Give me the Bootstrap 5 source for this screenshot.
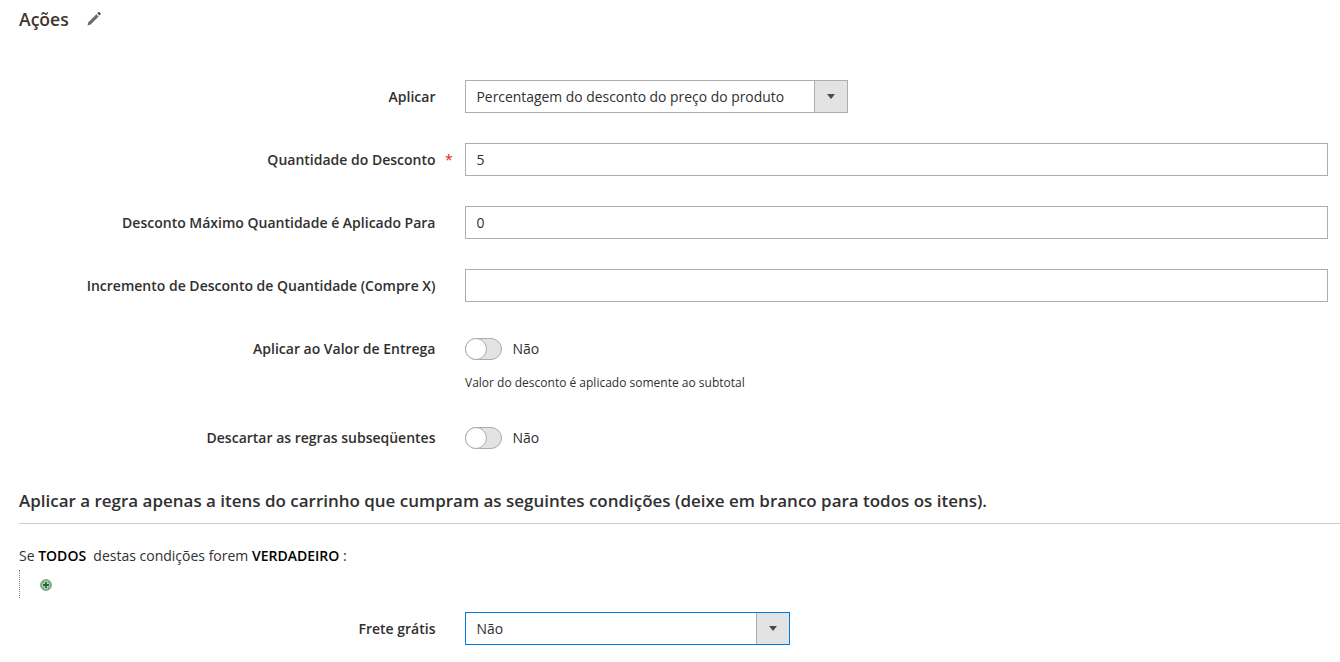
<!DOCTYPE html>
<html lang="pt-BR">
<head>
  <meta charset="UTF-8" />
  <meta name="viewport" content="width=device-width, initial-scale=1.0" />
  <title>Ações</title>
  <link href="https://cdn.jsdelivr.net/npm/bootstrap@5.3.3/dist/css/bootstrap.min.css" rel="stylesheet" />
  <style>
    html, body { height: 100%; overflow: hidden; }
    body { font-family: "Open Sans", sans-serif; font-size: 14px; color: #303030; background: #fff; }
    .page-wrap { padding-left: 19px; }
    .section-head { height: 80px; padding-top: 9px; }
    .section-title { font-size: 17.6px; font-weight: 600; line-height: 20px; color: #41362f; margin: 0; }
    .edit-icon { margin-left: 17px; margin-top: 2px; }
    .field-row { display: flex; align-items: flex-start; margin-bottom: 30px; margin-left: -19px; padding-right: 12px; }
    .field-label { width: 435.5px; flex: none; text-align: right; font-weight: 600; color: #303030; line-height: 33px; margin: 0; }
    .field-mark { width: 29.5px; flex: none; line-height: 33px; padding-left: 9.5px; color: #e22626; }
    .field-control { flex: 1 1 auto; }
    .text-field.form-control { height: 33px; border: 1px solid #adadad; border-radius: 0; font-size: 14px; color: #303030; padding: 0 10.5px; line-height: 31px; box-shadow: none; }
    .select-field { display: flex; height: 33px; border: 1px solid #adadad; background: #fff; }
    .select-field select { flex: 1 1 auto; min-width: 0; appearance: none; border: 0; outline: 0; background: transparent; padding: 1px 10.5px 0; font-family: inherit; font-size: 13.9px; color: #303030; }
    .select-arrow { width: 33px; flex: none; background: #e3e3e3; border-left: 1px solid #adadad; display: flex; align-items: center; justify-content: center; }
    .select-arrow::after { content: ""; border: 4.5px solid transparent; border-top: 5px solid #514943; border-bottom: 0; }
    .select-wide { width: 383px; }
    .select-focus { width: 325px; border-color: #007bdb; }
    .toggle-line { display: flex; align-items: center; height: 33px; gap: 10.5px; }
    .toggle-track { width: 37px; height: 22px; border: 1px solid #adadad; border-radius: 12px; background: #e3e3e3; position: relative; }
    .toggle-track::before { content: ""; position: absolute; left: -1px; top: -1px; width: 22px; height: 22px; border-radius: 50%; background: #fff; border: 1px solid #adadad; }
    .toggle-text { color: #303030; }
    .field-note { font-size: 12px; line-height: 17px; margin-top: 9px; color: #303030; }
    .cond-head { font-size: 16.98px; font-weight: 600; line-height: 20px; color: #303030; margin: 37px 0 0; padding-bottom: 12px; border-bottom: 1px solid #cccccc; }
    .cond-line { margin-top: 22px; line-height: 20px; color: #303030; }
    .cond-line strong { font-weight: 600; color: #000; }
    .cond-tree { border-left: 1px dotted #808080; height: 28px; margin-top: 4px; padding: 8px 0 0 19px; margin-bottom: 14px; }
    .plus-icon { display: block; }
  </style>
</head>
<body>
  <div class="page-wrap">
    <div class="section-head d-flex align-items-start">
      <h2 class="section-title">Ações</h2>
      <svg class="edit-icon" width="16" height="16" viewBox="0 0 16 16" aria-hidden="true">
        <path d="M1.500 14.500l.9-3.200 8-8 2.300 2.300-8 8z" fill="#6b6b6b"/>
        <path d="M11.200 2.300l1-1c.4-.4.9-.4 1.300 0l1 1c.4.4.4.9 0 1.300l-1 1z" fill="#514943"/>
      </svg>
    </div>

    <div class="field-row">
      <label class="field-label">Aplicar</label>
      <span class="field-mark"></span>
      <div class="field-control">
        <div class="select-field select-wide">
          <select><option>Percentagem do desconto do preço do produto</option></select>
          <span class="select-arrow"></span>
        </div>
      </div>
    </div>

    <div class="field-row">
      <label class="field-label">Quantidade do Desconto</label>
      <span class="field-mark">*</span>
      <div class="field-control"><input type="text" class="form-control text-field" value="5" /></div>
    </div>

    <div class="field-row">
      <label class="field-label">Desconto Máximo Quantidade é Aplicado Para</label>
      <span class="field-mark"></span>
      <div class="field-control"><input type="text" class="form-control text-field" value="0" /></div>
    </div>

    <div class="field-row">
      <label class="field-label">Incremento de Desconto de Quantidade (Compre X)</label>
      <span class="field-mark"></span>
      <div class="field-control"><input type="text" class="form-control text-field" value="" /></div>
    </div>

    <div class="field-row">
      <label class="field-label">Aplicar ao Valor de Entrega</label>
      <span class="field-mark"></span>
      <div class="field-control">
        <div class="toggle-line"><span class="toggle-track"></span><span class="toggle-text">Não</span></div>
        <div class="field-note">Valor do desconto é aplicado somente ao subtotal</div>
      </div>
    </div>

    <div class="field-row">
      <label class="field-label">Descartar as regras subseqüentes</label>
      <span class="field-mark"></span>
      <div class="field-control">
        <div class="toggle-line"><span class="toggle-track"></span><span class="toggle-text">Não</span></div>
      </div>
    </div>

    <h3 class="cond-head">Aplicar a regra apenas a itens do carrinho que cumpram as seguintes condições (deixe em branco para todos os itens).</h3>
    <div class="cond-line">Se <strong>TODOS</strong>&nbsp; destas condições forem <strong>VERDADEIRO</strong> :</div>
    <div class="cond-tree">
      <svg class="plus-icon" width="14" height="14" viewBox="0 0 14 14" aria-hidden="true">
        <circle cx="7" cy="7" r="5.500" fill="#7aa886" stroke="#8fae96"/>
        <path d="M7 3v8M3 7h8" stroke="#d8e8da" stroke-width="3"/>
        <path d="M7 3.800v6.400M3.800 7h6.400" stroke="#1f6b33" stroke-width="1.800"/>
      </svg>
    </div>

    <div class="field-row">
      <label class="field-label">Frete grátis</label>
      <span class="field-mark"></span>
      <div class="field-control">
        <div class="select-field select-focus">
          <select><option>Não</option></select>
          <span class="select-arrow"></span>
        </div>
      </div>
    </div>
  </div>

  <script src="https://cdn.jsdelivr.net/npm/bootstrap@5.3.3/dist/js/bootstrap.bundle.min.js"></script>
</body>
</html>
